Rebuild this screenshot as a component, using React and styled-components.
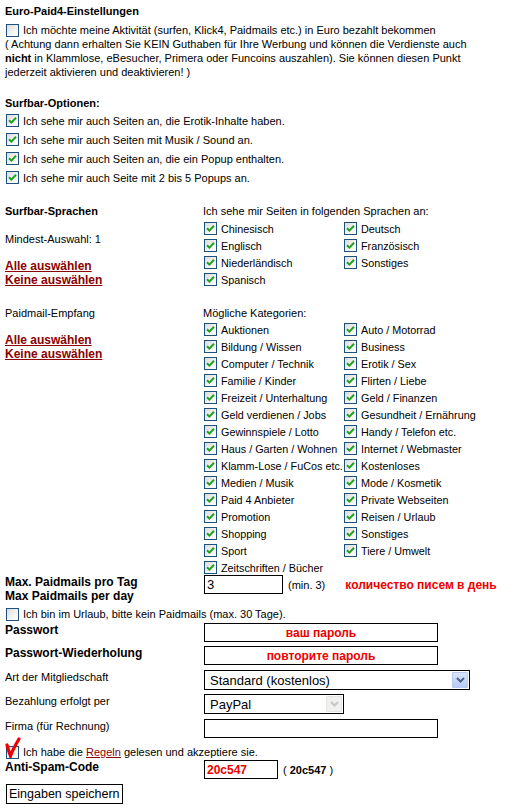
import React from 'react'
import styled, { createGlobalStyle } from 'styled-components'

const GlobalStyle = createGlobalStyle`
    body {
        margin: 0;
        background: #fff;
        color: #000;
        font-family: "Liberation Sans", Arial, sans-serif;
        font-size: 11px;
    }
`

const languages = ['Chinesisch', 'Englisch', 'Niederländisch', 'Spanisch', 'Deutsch', 'Französisch', 'Sonstiges']

const categories = [
    'Auktionen', 'Bildung / Wissen', 'Computer / Technik', 'Familie / Kinder', 'Freizeit / Unterhaltung',
    'Geld verdienen / Jobs', 'Gewinnspiele / Lotto', 'Haus / Garten / Wohnen', 'Klamm-Lose / FuCos etc.',
    'Medien / Musik', 'Paid 4 Anbieter', 'Promotion', 'Shopping', 'Sport', 'Zeitschriften / Bücher',
    'Auto / Motorrad', 'Business', 'Erotik / Sex', 'Flirten / Liebe', 'Geld / Finanzen',
    'Gesundheit / Ernährung', 'Handy / Telefon etc.', 'Internet / Webmaster', 'Kostenloses',
    'Mode / Kosmetik', 'Private Webseiten', 'Reisen / Urlaub', 'Sonstiges', 'Tiere / Umwelt',
]

const surfOptions = [
    'Ich sehe mir auch Seiten an, die Erotik-Inhalte haben.',
    'Ich sehe mir auch Seiten mit Musik / Sound an.',
    'Ich sehe mir auch Seiten an, die ein Popup enthalten.',
    'Ich sehe mir auch Seite mit 2 bis 5 Popups an.',
]

function CheckBox({ checked }) {
    return (
        <Box>
            {checked && (
                <svg width="9" height="9" viewBox="0 0 9 9">
                    <path d="M1 4.2 L3.4 6.6 L8 1.8" fill="none" stroke="#21a121" strokeWidth="2" />
                </svg>
            )}
        </Box>
    )
}

function Select({ value, width, disabled }) {
    return (
        <SelectBox $width={width}>
            <span>{value}</span>
            <Arrow $disabled={disabled}>
                <svg width="9" height="6" viewBox="0 0 9 6">
                    <path d="M1 1 L4.5 4.5 L8 1" fill="none" stroke={disabled ? '#c6c6c6' : '#4d6185'} strokeWidth="2" />
                </svg>
            </Arrow>
        </SelectBox>
    )
}

export default function App() {
    return (
        <Page>
            <GlobalStyle />

            <Heading>Euro-Paid4-Einstellungen</Heading>
            <Para>
                <CheckLine>
                    <CheckBox />
                    <span>Ich möchte meine Aktivität (surfen, Klick4, Paidmails etc.) in Euro bezahlt bekommen</span>
                </CheckLine>
                ( Achtung dann erhalten Sie KEIN Guthaben für Ihre Werbung und können die Verdienste auch<br />
                <b>nicht</b> in Klammlose, eBesucher, Primera oder Funcoins auszahlen). Sie können diesen Punkt<br />
                jederzeit aktivieren und deaktivieren! )
            </Para>

            <Heading $top={17}>Surfbar-Optionen:</Heading>
            <OptionList>
                {surfOptions.map(text => (
                    <CheckLine key={text} $height={19}>
                        <CheckBox checked />
                        <span>{text}</span>
                    </CheckLine>
                ))}
            </OptionList>

            <Section $top={17}>
                <Side>
                    <BoldLabel>Surfbar-Sprachen</BoldLabel>
                    <SideText $top={14}>Mindest-Auswahl: 1</SideText>
                    <Links $top={13}>
                        <a href="#">Alle auswählen</a>
                        <a href="#">Keine auswählen</a>
                    </Links>
                </Side>
                <div>
                    <SideText>Ich sehe mir Seiten in folgenden Sprachen an:</SideText>
                    <ChoiceGrid $rows={4} $top={2}>
                        {languages.map(l => (
                            <Choice key={l}>
                                <CheckBox checked />
                                <span>{l}</span>
                            </Choice>
                        ))}
                    </ChoiceGrid>
                </div>
            </Section>

            <Section $top={18}>
                <Side>
                    <SideText>Paidmail-Empfang</SideText>
                    <Links $top={13}>
                        <a href="#">Alle auswählen</a>
                        <a href="#">Keine auswählen</a>
                    </Links>
                </Side>
                <div>
                    <SideText>Mögliche Kategorien:</SideText>
                    <ChoiceGrid $rows={15} $top={1}>
                        {categories.map((c, i) => (
                            <Choice key={c + i}>
                                <CheckBox checked />
                                <span>{c}</span>
                            </Choice>
                        ))}
                    </ChoiceGrid>
                </div>
            </Section>

            <FormRow $top={-1}>
                <BoldLabel $size={12}>Max. Paidmails pro Tag<br />Max Paidmails per day</BoldLabel>
                <Inline>
                    <Field $width={79} defaultValue="3" />
                    <Hint>(min. 3)</Hint>
                    <RedNote>количество писем в день</RedNote>
                </Inline>
            </FormRow>

            <CheckLine $height={18} $top={2}>
                <CheckBox />
                <span>Ich bin im Urlaub, bitte kein Paidmails (max. 30 Tage).</span>
            </CheckLine>

            <FormRow $top={0}>
                <BoldLabel $size={12}>Passwort</BoldLabel>
                <Field $width={234} $red $center defaultValue="ваш пароль" />
            </FormRow>
            <FormRow $top={4}>
                <BoldLabel $size={12}>Passwort-Wiederholung</BoldLabel>
                <Field $width={234} $red $center defaultValue="повторите пароль" />
            </FormRow>
            <FormRow $top={5}>
                <SideText>Art der Mitgliedschaft</SideText>
                <Select value="Standard (kostenlos)" width={266} />
            </FormRow>
            <FormRow $top={4}>
                <SideText>Bezahlung erfolgt per</SideText>
                <Select value="PayPal" width={140} disabled />
            </FormRow>
            <FormRow $top={5}>
                <SideText>Firma (für Rechnung)</SideText>
                <Field $width={234} />
            </FormRow>

            <CheckLine $height={18} $top={5}>
                <Marked>
                    <CheckBox />
                    <RedTick width="16" height="22" viewBox="0 0 16 22">
                        <path d="M2 9 C3 13 4 16 5.5 20 C8 13 11 8 14 3" fill="none" stroke="#ee0000" strokeWidth="3.2" strokeLinecap="round" />
                    </RedTick>
                </Marked>
                <span>Ich habe die <a href="#">Regeln</a> gelesen und akzeptiere sie.</span>
            </CheckLine>

            <FormRow $top={-1}>
                <BoldLabel $size={12}>Anti-Spam-Code</BoldLabel>
                <Inline>
                    <Field $width={74} $red defaultValue="20c547" />
                    <Hint>( <b>20c547</b> )</Hint>
                </Inline>
            </FormRow>

            <SaveButton>Eingaben speichern</SaveButton>
        </Page>
    )
}

const Page = styled.div`
    padding: 4px 5px 6px 5px;
    width: 504px;
    box-sizing: border-box;

    a {
        color: #8b0000;
        font-weight: bold;
        text-decoration: underline;
    }
`

const Heading = styled.div`
    font-weight: bold;
    font-size: 11px;
    line-height: 14px;
    margin-top: ${p => p.$top || 0}px;
`

const Para = styled.div`
    margin-top: 5px;
    line-height: 14px;
`

const CheckLine = styled.div`
    display: flex;
    align-items: center;
    gap: 4px;
    height: ${p => p.$height || 14}px;
    margin-top: ${p => p.$top || 0}px;
    white-space: nowrap;

    a {
        font-weight: normal;
    }
`

const OptionList = styled.div`
    margin-top: 1px;
`

const Box = styled.span`
    width: 11px;
    height: 11px;
    flex: none;
    border: 1px solid #1c5180;
    background: linear-gradient(135deg, #dcdcd7 0%, #f4f4f2 60%, #ffffff 100%);
    display: inline-flex;
    align-items: center;
    justify-content: center;
    margin-left: 1px;
`

const Section = styled.div`
    display: grid;
    grid-template-columns: 198px 1fr;
    margin-top: ${p => p.$top}px;
`

const Side = styled.div`
    display: flex;
    flex-direction: column;
`

const BoldLabel = styled.div`
    font-weight: bold;
    font-size: ${p => p.$size || 11}px;
    line-height: 14px;
`

const SideText = styled.div`
    line-height: 14px;
    margin-top: ${p => p.$top || 0}px;
`

const Links = styled.div`
    display: flex;
    flex-direction: column;
    line-height: 14px;
    font-size: 12px;
    margin-top: ${p => p.$top || 0}px;
`

const ChoiceGrid = styled.div`
    display: grid;
    grid-auto-flow: column;
    grid-template-rows: repeat(${p => p.$rows}, 17px);
    grid-template-columns: 140px 140px;
    margin-top: ${p => p.$top}px;
`

const Choice = styled.div`
    display: flex;
    align-items: center;
    gap: 4px;
    font-size: 10.8px;
    white-space: nowrap;
`

const FormRow = styled.div`
    display: grid;
    grid-template-columns: 198px 1fr;
    align-items: start;
    margin-top: ${p => p.$top || 0}px;
`

const Inline = styled.div`
    display: flex;
    align-items: center;
    gap: 4px;
`

const Field = styled.input`
    box-sizing: border-box;
    width: ${p => p.$width}px;
    height: 19px;
    margin: 0 0 0 1px;
    border: 1px solid #000;
    padding: 0 2px;
    font-family: "Liberation Sans", Arial, sans-serif;
    font-size: ${p => (p.$red ? 12 : 13)}px;
    font-weight: ${p => (p.$red ? 'bold' : 'normal')};
    color: ${p => (p.$red ? '#ee0000' : '#000')};
    text-align: ${p => (p.$center ? 'center' : 'left')};
    outline: none;
`

const Hint = styled.span`
    font-size: 11px;
    margin-left: 1px;
`

const RedNote = styled.span`
    color: #ee0000;
    font-weight: bold;
    font-size: 12px;
    margin-left: 16px;
`

const SelectBox = styled.div`
    box-sizing: border-box;
    width: ${p => p.$width}px;
    height: 20px;
    margin-left: 1px;
    border: 1px solid #000;
    display: flex;
    align-items: center;
    justify-content: space-between;
    padding: 0 1px 0 5px;
    font-size: 13px;
`

const Arrow = styled.span`
    width: 16px;
    height: 16px;
    display: flex;
    align-items: center;
    justify-content: center;
    border-radius: 1px;
    background: ${p => (p.$disabled ? '#f0f0ee' : 'linear-gradient(180deg, #d9e4fc 0%, #b7cbf7 100%)')};
    border: 1px solid ${p => (p.$disabled ? '#e4e4e0' : '#b8c9f0')};
    box-sizing: border-box;
`

const Marked = styled.span`
    position: relative;
    display: inline-flex;
`

const RedTick = styled.svg`
    position: absolute;
    left: 0px;
    top: -10px;
`

const SaveButton = styled.button`
    margin: 5px 0 0 1px;
    height: 20px;
    padding: 0 2px;
    border: 1px solid #000;
    background: #fff;
    font-family: "Liberation Sans", Arial, sans-serif;
    font-size: 12.5px;
    color: #000;
`
